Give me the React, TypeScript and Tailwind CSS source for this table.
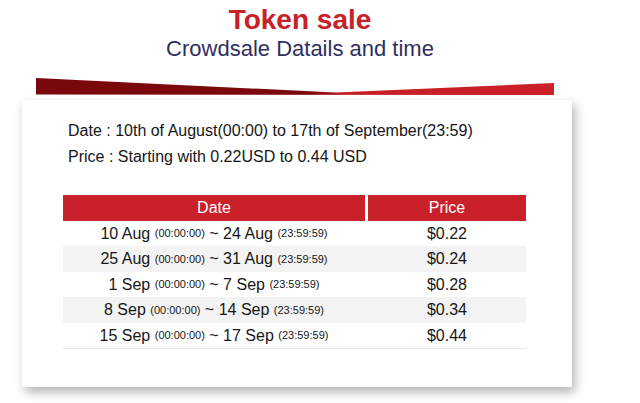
import React from "react";

const rows: { a: string; b: string; p: string; h: string; gray: boolean }[] = [
  { a: "10 Aug", b: "24 Aug", p: "$0.22", h: "h-[25px]", gray: false },
  { a: "25 Aug", b: "31 Aug", p: "$0.24", h: "h-[26px]", gray: true },
  { a: "1 Sep", b: "7 Sep", p: "$0.28", h: "h-[25px]", gray: false },
  { a: "8 Sep", b: "14 Sep", p: "$0.34", h: "h-[26px]", gray: true },
  { a: "15 Sep", b: "17 Sep", p: "$0.44", h: "h-[25px]", gray: false },
];

function Small({ children }: { children: React.ReactNode }) {
  return <span className="text-[11px]">{children}</span>;
}

export default function App() {
  return (
    <div
      className="w-[640px] h-[403px] bg-white overflow-hidden"
      style={{ fontFamily: '"Liberation Sans", Arial, sans-serif' }}
    >
      <div className="ml-[22px] w-[550px] pt-[4px] flex flex-col">
        <h1 className="text-center text-[28px] leading-[32px] font-bold text-[#c9202a] pl-[6px]">
          Token sale
        </h1>
        <p className="text-center text-[22px] leading-[26px] text-[#2f2f5f] pl-[6px]">
          Crowdsale Datails and time
        </p>
        <svg
          className="mt-[16px] ml-[14px] block"
          width="518"
          height="17"
          viewBox="0 0 518 17"
        >
          <defs>
            <linearGradient id="band" x1="0" y1="0" x2="1" y2="0">
              <stop offset="0" stopColor="#7a070b" />
              <stop offset="0.53" stopColor="#7c080c" />
              <stop offset="0.6" stopColor="#c61d27" />
              <stop offset="1" stopColor="#cb2029" />
            </linearGradient>
          </defs>
          <polygon points="0,0 300,14.5 518,5 518,17 0,16.5" fill="url(#band)" />
        </svg>
        <div className="mt-[5px] h-[287px] bg-white shadow-[3px_5px_10px_rgba(0,0,0,0.3)] pt-[18px] pl-[46px] text-[#161616]">
          <p className="text-[16px] leading-[26px]">
            Date : 10th of August(00:00) to 17th of September(23:59)
          </p>
          <p className="text-[16px] leading-[26px]">
            Price : Starting with 0.22USD to 0.44 USD
          </p>
          <div className="mt-[25px] -ml-[5px] w-[463px] border-b border-[#e6e6e6]">
            <div className="grid grid-cols-[302px_158px] gap-x-[3px] h-[26px] text-white text-[16px]">
              <div className="bg-[#c9202a] flex items-center justify-center">Date</div>
              <div className="bg-[#c9202a] flex items-center justify-center">Price</div>
            </div>
            {rows.map((r) => (
              <div
                key={r.a}
                className={`grid grid-cols-[302px_158px] gap-x-[3px] ${r.h} ${
                  r.gray ? "bg-[#f3f3f3]" : "bg-white"
                } text-[16px] text-[#161616]`}
              >
                <div className="flex items-center justify-center whitespace-pre">
                  {r.a} <Small>(00:00:00)</Small> ~ {r.b} <Small>(23:59:59)</Small>
                </div>
                <div className="flex items-center justify-center">{r.p}</div>
              </div>
            ))}
          </div>
        </div>
      </div>
    </div>
  );
}
